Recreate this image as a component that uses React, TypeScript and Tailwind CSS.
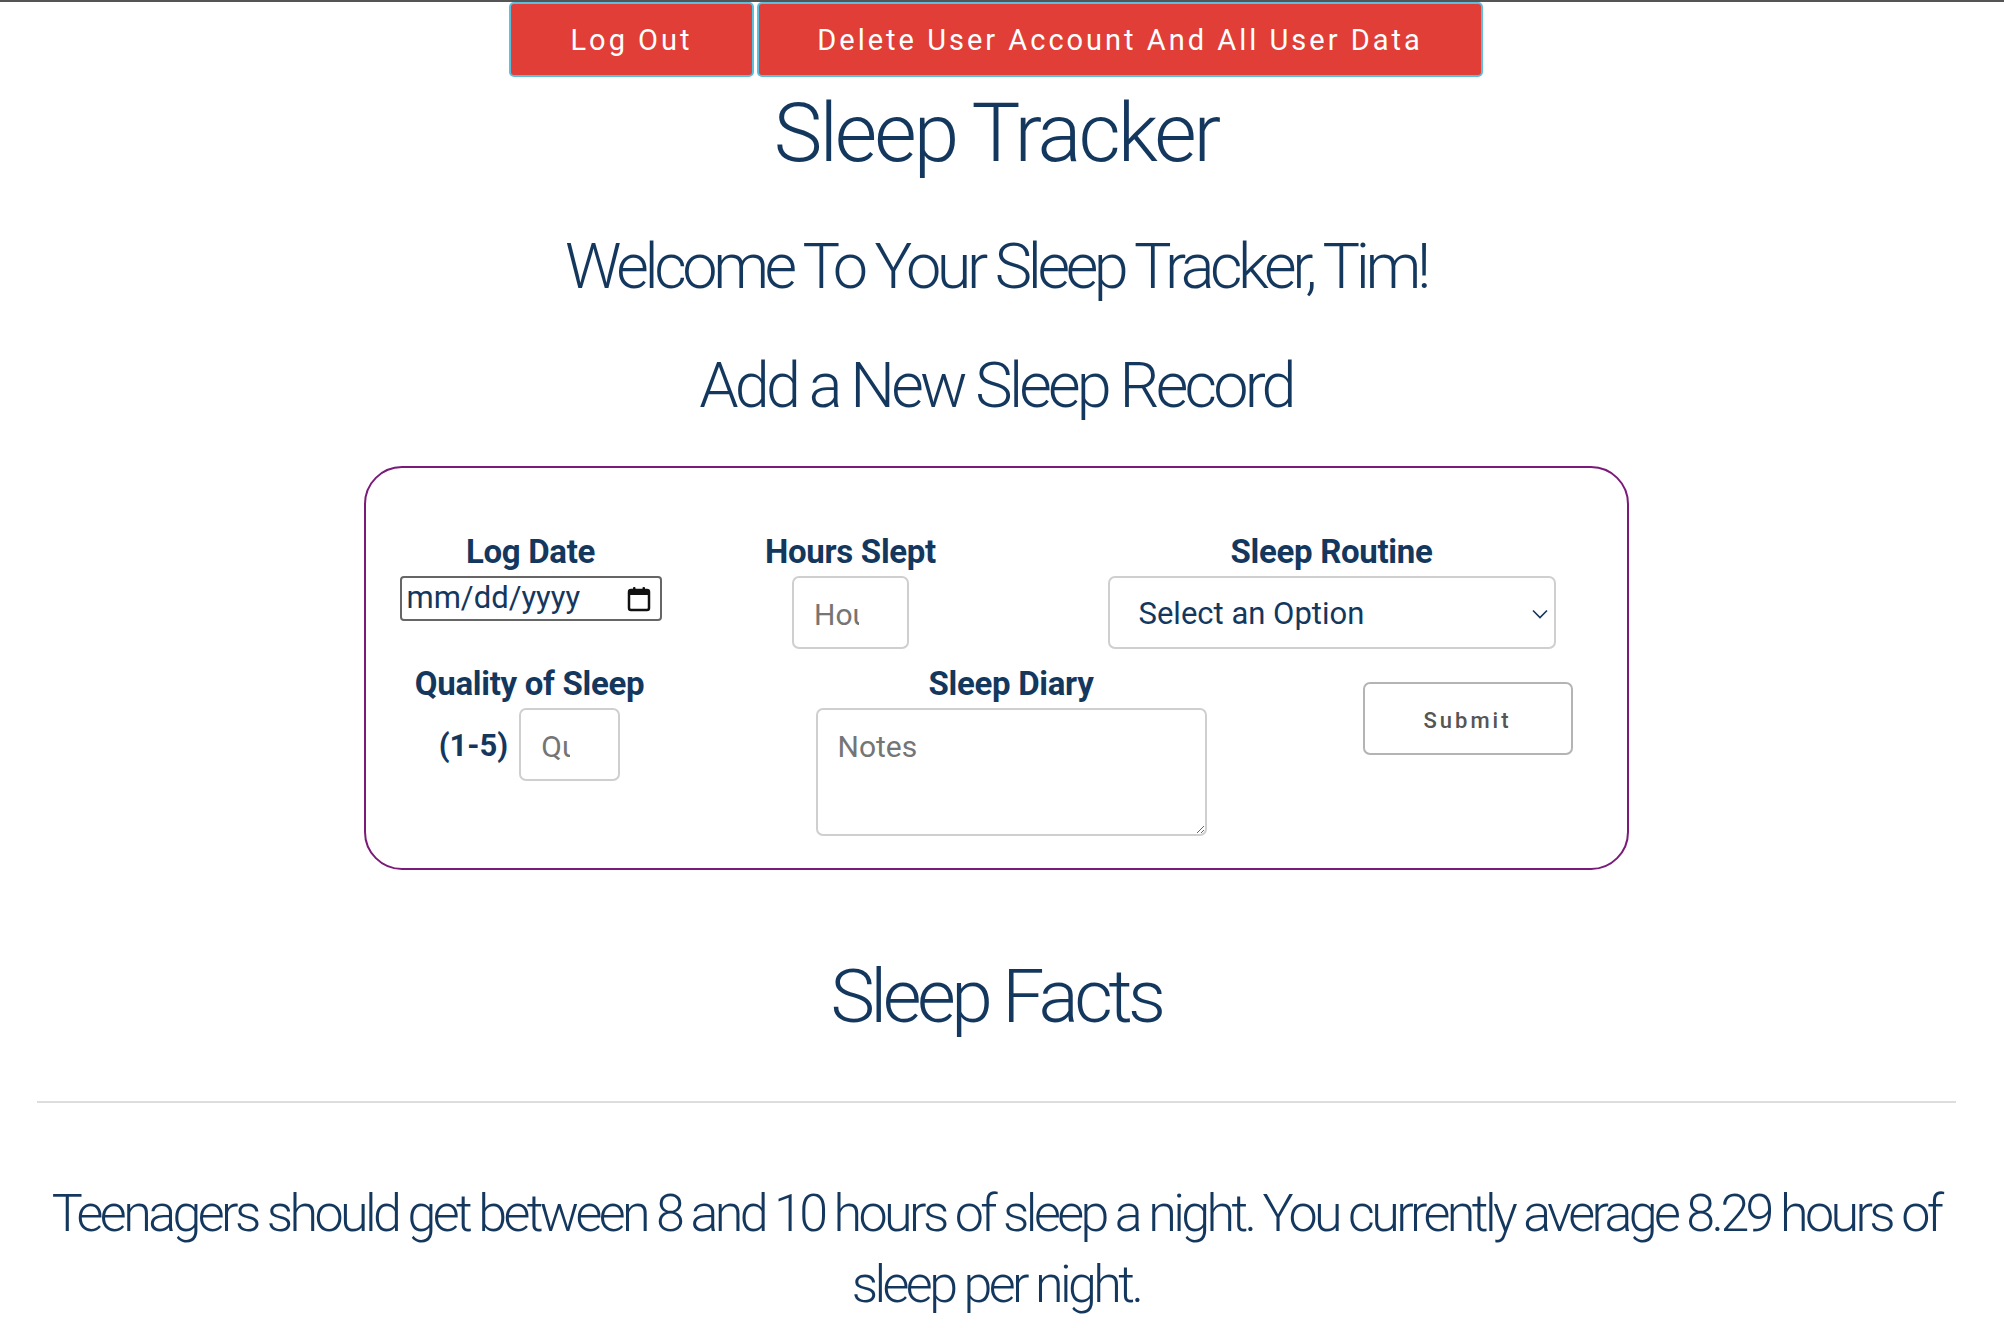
import React from 'react';

function CalendarIcon() {
  return (
    <svg width="24" height="26" viewBox="0 0 24 26" className="shrink-0">
      <rect x="2" y="4" width="20" height="20" rx="2" fill="none" stroke="#111" strokeWidth="2.5" />
      <rect x="2" y="4" width="20" height="5" fill="#111" />
      <rect x="6" y="1" width="2.5" height="5" rx="1" fill="#111" />
      <rect x="15.5" y="1" width="2.5" height="5" rx="1" fill="#111" />
    </svg>
  );
}

function Chevron() {
  return (
    <svg width="16" height="10" viewBox="0 0 16 10" className="pointer-events-none absolute right-[8px] top-[33px]">
      <path d="M1 1.5 L8 8.5 L15 1.5" fill="none" stroke="#14375e" strokeWidth="1.6" />
    </svg>
  );
}

export default function App() {
  const heading = "font-['Roboto','Liberation_Sans',sans-serif] font-light text-[#14375e]";
  const label = "font-['Roboto','Liberation_Sans',sans-serif] font-bold text-[33px] leading-[34px] text-[#14375e] tracking-[-0.3px]";
  const field = "font-['Roboto','Liberation_Sans',sans-serif] border-2 border-[#cfcfcf] rounded-[7px] bg-white outline-none placeholder:text-[#757575]";

  return (
    <div className="min-h-[1328px] w-full bg-white border-t-2 border-[#555]">
      <div className="w-[1992px] flex flex-col items-center">
        {/* buttons */}
        <div className="flex gap-[3px]">
          <button className="h-[75px] w-[245px] bg-[#e03e36] border-2 border-[#5bc0de] rounded-[5px] text-white text-[29px] tracking-[3px] pt-[2px] font-['Roboto','Liberation_Sans',sans-serif]">
            Log Out
          </button>
          <button className="h-[75px] w-[726px] bg-[#e03e36] border-2 border-[#5bc0de] rounded-[5px] text-white text-[29px] tracking-[3px] pt-[2px] font-['Roboto','Liberation_Sans',sans-serif]">
            Delete User Account And All User Data
          </button>
        </div>

        <h1 className={`${heading} text-[82px] leading-[96px] mt-[8px] tracking-[-3px]`}>Sleep Tracker</h1>
        <h2 className={`${heading} text-[63px] leading-[76px] mt-[48px] tracking-[-4.4px]`}>Welcome To Your Sleep Tracker, Tim!</h2>
        <h2 className={`${heading} text-[63px] leading-[76px] mt-[43px] tracking-[-3.8px]`}>Add a New Sleep Record</h2>

        {/* form */}
        <form className="mt-[42px] w-[1265px] h-[404px] border-2 border-[#7a1b7a] rounded-[38px] pt-[67px]">
          <div className="flex items-start">
            <div className="ml-[34px] w-[262px] flex flex-col items-center">
              <label className={label}>Log Date</label>
              <div className="mt-[7px] w-[262px] h-[45px] border-2 border-[#666] rounded-[4px] flex items-center justify-between pl-[5px] pr-[9px]">
                <span className="font-['Roboto','Liberation_Sans',sans-serif] text-[31px] text-[#14375e]">mm/dd/yyyy</span>
                <CalendarIcon />
              </div>
            </div>
            <div className="ml-[103px] w-[172px] flex flex-col items-center">
              <label className={label}>Hours Slept</label>
              <input className={`${field} text-[30px] mt-[7px] w-[117px] h-[73px] pl-[20px] pr-[48px] pt-[3px]`} placeholder="Hours" />
            </div>
            <div className="ml-[171px] w-[448px] flex flex-col items-center">
              <label className={label}>Sleep Routine</label>
              <div className="relative mt-[7px]">
                <select className={`${field} text-[31px] appearance-none w-[448px] h-[73px] pl-[29px] pt-[3px] text-[#14375e]`}>
                  <option>Select an Option</option>
                </select>
                <Chevron />
              </div>
            </div>
          </div>

          <div className="flex items-start mt-[18px]">
            <div className="ml-[49px] w-[230px] flex flex-col items-center">
              <label className={label}>Quality of Sleep</label>
              <div className="mt-[7px] flex items-center gap-[11px]">
                <span className="font-['Roboto','Liberation_Sans',sans-serif] font-bold text-[31px] text-[#14375e] pt-[3px]">(1-5)</span>
                <input className={`${field} text-[30px] w-[101px] h-[73px] pl-[20px] pr-[48px] pt-[3px]`} placeholder="Quality" />
              </div>
            </div>
            <div className="ml-[171px] w-[391px] flex flex-col items-center">
              <label className={label}>Sleep Diary</label>
              <textarea className={`${field} text-[30px] mt-[7px] w-[391px] h-[128px] pl-[20px] pt-[14px]`} placeholder="Notes" />
            </div>
            <div className="ml-[156px] w-[210px] pt-[15px]">
              <button type="button" className="w-[210px] h-[73px] border-2 border-[#b4b4b4] rounded-[7px] bg-white text-[#555] text-[22px] font-medium tracking-[3px] pt-[4px] font-['Roboto','Liberation_Sans',sans-serif]">
                Submit
              </button>
            </div>
          </div>
        </form>

        <h2 className={`${heading} text-[75px] leading-[90px] mt-[81px] tracking-[-4.5px]`}>Sleep Facts</h2>
        <hr className="mt-[60px] w-[1919px] border-0 border-t-2 border-[#dddddd]" />
        <p className={`${heading} text-[52px] leading-[71px] mt-[75px] w-[1919px] text-center tracking-[-3.6px]`}>
          Teenagers should get between 8 and 10 hours of sleep a night. You currently average 8.29 hours of sleep per night.
        </p>
      </div>
    </div>
  );
}
